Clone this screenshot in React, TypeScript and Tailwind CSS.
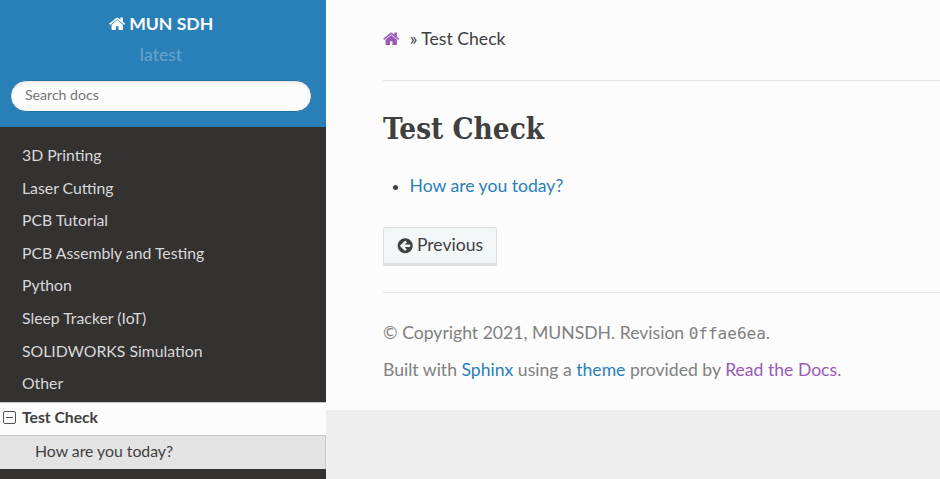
const HOME =
  "M1472 992v480q0 26-19 45t-45 19h-384v-384h-256v384h-384q-26 0-45-19t-19-45v-480q0-1 .5-3t.5-3l575-474 575 474q1 2 1 6zm223-69l-62 74q-8 9-21 11h-3q-13 0-21-7l-692-577-692 577q-12 8-24 7-13-2-21-11l-62-74q-8-10-7-23.5t11-21.5l719-599q32-26 76-26t76 26l244 204v-195q0-14 9-23t23-9h192q14 0 23 9t9 23v408l219 182q10 8 11 21.5t-7 23.5z";
const ARROW =
  "M1408 960v-128q0-26-19-45t-45-19h-502l189-189q19-19 19-45t-19-45l-91-91q-18-18-45-18t-45 18l-362 362-91 91q-18 18-18 45t18 45l91 91 362 362q18 18 45 18t45-18l91-91q18-18 18-45t-18-45l-189-189h502q26 0 45-19t19-45zm256-64q0 209-103 385.5t-279.5 279.5-385.5 103-385.5-103-279.5-279.5-103-385.5 103-385.5 279.5-279.5 385.5-103 385.5 103 279.5 279.5 103 385.5z";

function Icon({ path, className }: { path: string; className: string }) {
  return (
    <svg viewBox="64 0 1664 1792" fill="currentColor" className={className} aria-hidden="true">
      <path d={path} />
    </svg>
  );
}

const menu = [
  "3D Printing",
  "Laser Cutting",
  "PCB Tutorial",
  "PCB Assembly and Testing",
  "Python",
  "Sleep Tracker (IoT)",
  "SOLIDWORKS Simulation",
  "Other",
];

function Sidebar() {
  return (
    <nav className="flex w-[326px] shrink-0 flex-col bg-[#343131]">
      <div className="flex h-[127px] flex-col items-center bg-[#2980b9] pr-[4px]">
        <a className="mt-[11px] flex h-[26px] items-center text-[17.6px] font-bold text-[#fcfcfc]">
          <Icon path={HOME} className="mr-1 h-[17.6px] w-[16.4px]" />
          MUN SDH
        </a>
        <div className="mt-[5px] h-[26px] text-[17.6px] leading-[26px] text-white/30">latest</div>
        <input
          type="text"
          placeholder="Search docs"
          className="mt-[12px] h-[32px] w-[302px] rounded-full border border-[#2472a4] bg-[#fcfcfc] px-[14px] pb-[3px] text-[14.1px] shadow-[inset_0_1px_3px_#ddd] outline-none placeholder:text-[#757575]"
        />
      </div>
      <ul className="pt-[12px] text-[15.8px] text-[#d9d9d9]">
        {menu.map((item) => (
          <li key={item} className="h-[32.6px] pl-[22px] leading-[32.6px]">
            {item}
          </li>
        ))}
      </ul>
      <div className="mt-[2px] flex h-[33px] items-center border-t border-[#c9c9c9] bg-[#fcfcfc] pb-[2px] pl-[3px] text-[15.7px] font-bold text-[#404040]">
        <svg viewBox="0 0 13 13" className="mr-[6px] h-[13px] w-[13px]" fill="none" stroke="#555555" aria-hidden="true">
          <rect x="0.5" y="0.5" width="12" height="12" rx="1.5" />
          <path d="M3 6.5h7" />
        </svg>
        Test Check
      </div>
      <div className="h-[34px] border-t border-r border-[#c9c9c9] bg-[#e3e3e3] pl-[35px] text-[15.8px] leading-[30px] text-[#404040]">
        How are you today?
      </div>
    </nav>
  );
}

export default function App() {
  return (
    <div className="flex h-[479px] w-[940px] overflow-hidden bg-[#eeeeee] font-[Lato,sans-serif] text-[17.6px] text-[#404040]">
      <Sidebar />
      <main className="h-[410px] flex-1 bg-[#fcfcfc] pl-[57px]">
        <div className="flex h-[80px] items-center pb-[2px]">
          <Icon path={HOME} className="mr-[10.4px] h-[17.6px] w-[16.4px] text-[#9b59b6]" />
          <span>» Test Check</span>
        </div>
        <hr className="border-[#e1e4e5]" />
        <h1 className="mt-[27px] h-[42px] origin-left scale-x-[1.015] font-['Roboto_Slab','DejaVu_Serif_Condensed','DejaVu_Serif',serif] text-[29px] leading-[42px] font-bold">
          Test Check
        </h1>
        <ul className="mt-[23px] flex h-[26px] items-center">
          <li className="flex items-center">
            <span className="mt-[2px] mr-[11.5px] ml-[10px] h-[5px] w-[5px] rounded-full bg-[#404040]" />
            <a className="text-[#2980b9]">How are you today?</a>
          </li>
        </ul>
        <a className="mt-[28px] flex h-[39px] w-[114px] items-center rounded-[2px] border border-b-[3px] border-[#dbdfdf] bg-[#f3f6f6] pl-[13px]">
          <Icon path={ARROW} className="mr-[3.5px] h-[17.6px] w-[16.4px]" />
          Previous
        </a>
        <hr className="mt-[26px] border-[#e1e4e5]" />
        <footer className="pt-[27px] text-[#808080]">
          <p className="h-[26px] leading-[26px]">
            © Copyright 2021, MUNSDH. Revision{" "}
            <span className="font-['DejaVu_Sans_Mono',monospace] text-[16px]">0ffae6ea</span>.
          </p>
          <p className="mt-[11px] h-[26px] leading-[26px]">
            Built with <a className="text-[#2980b9]">Sphinx</a> using a <a className="text-[#2980b9]">theme</a> provided by{" "}
            <a className="text-[#9b59b6]">Read the Docs</a>.
          </p>
        </footer>
      </main>
    </div>
  );
}
